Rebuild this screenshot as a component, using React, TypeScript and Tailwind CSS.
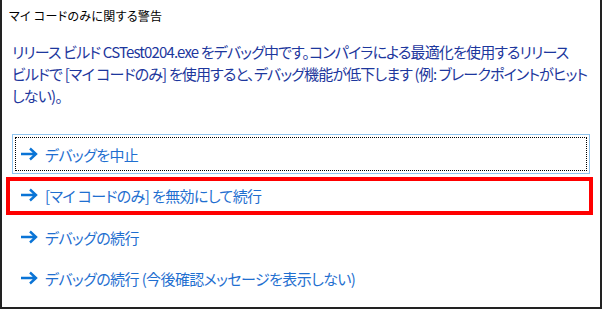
import React from "react"

function Arrow() {
  return (
    <svg width="18" height="14" viewBox="0 0 18 14" className="shrink-0">
      <path d="M1 7 H16 M10 1.5 L16 7 L10 12.5" fill="none" stroke="#0a74d6" strokeWidth="2.4" strokeLinecap="butt" strokeLinejoin="miter" />
    </svg>
  )
}

function CommandLink({ label, focused }: { label: string; focused?: boolean }) {
  return (
    <div
      className={
        "h-[40px] flex items-center " +
        (focused ? "border border-[#8fc4ee] p-[2px]" : "p-[3px]")
      }
    >
      <div
        className={
          "flex-1 h-full flex items-center gap-[7px] pl-[4px] " +
          (focused ? "border border-dotted border-black" : "border border-transparent")
        }
      >
        <Arrow />
        <span className="text-[15px] tracking-[-0.6px] text-[#1f6fd0] leading-none whitespace-nowrap">{label}</span>
      </div>
    </div>
  )
}

export default function App() {
  return (
    <div className="w-[602px] h-[309px] bg-white border-x-2 border-b-2 border-[#222] font-['Noto_Sans_CJK_JP',sans-serif] [font-feature-settings:'palt'] overflow-hidden">
      <div className="pl-[7px] pt-[7px] h-[25px] text-[12px] tracking-[0.3px] leading-[18px] text-black">マイ コードのみに関する警告</div>
      <p className="mt-[16px] pl-[10px] text-[15px] tracking-[-0.85px] leading-[22px] text-[#1d379d] whitespace-nowrap">
        リリース ビルド CSTest0204.exe をデバッグ中です。コンパイラによる最適化を使用するリリース
        <br />
        ビルドで [マイ コードのみ] を使用すると、デバッグ機能が低下します (例: ブレークポイントがヒット
        <br />
        しない)。
      </p>
      <div className="mt-[27px] mx-[10px] flex flex-col gap-[1px]">
        <CommandLink label="デバッグを中止" focused />
        <div className="relative">
          <CommandLink label="[マイ コードのみ] を無効にして続行" />
          <div className="absolute top-[2px] bottom-0 left-[-6px] right-[-3px] border-4 border-[#ff0000]" />
        </div>
        <div className="mt-[1px]">
          <CommandLink label="デバッグの続行" />
        </div>
        <CommandLink label="デバッグの続行 (今後確認メッセージを表示しない)" />
      </div>
    </div>
  )
}
